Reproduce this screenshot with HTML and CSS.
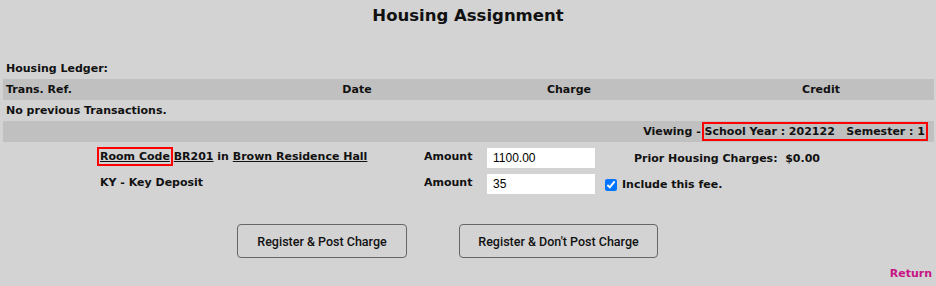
FILE: index.html
```html
<!DOCTYPE html>
<html lang="en">
<head>
    <meta charset="UTF-8">
    <title>Housing Assignment</title>
    <link rel="stylesheet" href="styles.css">
</head>
<body>
<div class="page">
    <h1 class="page-title">Housing Assignment</h1>

    <div class="ledger-label">Housing Ledger:</div>
    <table class="ledger">
        <tr class="ledger-head">
            <td class="col-ref">Trans. Ref.</td>
            <td class="col-date">Date</td>
            <td class="col-charge">Charge</td>
            <td class="col-credit">Credit</td>
        </tr>
        <tr>
            <td colspan="4">No previous Transactions.</td>
        </tr>
        <tr class="ledger-head">
            <td colspan="4" class="viewing">Viewing - <span class="marked">School Year : 202122&nbsp;&nbsp;&nbsp;Semester : 1</span></td>
        </tr>
    </table>

    <div class="assign-form">
        <div class="room"><span class="marked"><u>Room Code</u></span> <u>BR201</u> in <u>Brown Residence Hall</u></div>
        <div class="amount-label">Amount</div>
        <input type="text" class="amount" value="1100.00">
        <div class="extra prior">Prior Housing Charges:&nbsp; $0.00</div>

        <div class="room">KY - Key Deposit</div>
        <div class="amount-label">Amount</div>
        <input type="text" class="amount" value="35">
        <label class="extra fee"><input type="checkbox" checked> Include this fee.</label>
    </div>

    <div class="controls">
        <button class="btn">Register &amp; Post Charge</button>
        <button class="btn btn-wide">Register &amp; Don't Post Charge</button>
    </div>

    <div class="return-row"><a href="#" class="return-link">Return</a></div>
</div>
</body>
</html>
```

FILE: styles.css
```css
body {
    margin: 0;
    background-color: #d3d3d3;
    font-family: 'DejaVu Sans', sans-serif;
    font-size: 11px;
    font-weight: bold;
    color: #111;
}

.page {
    padding: 0 3px;
}

.page-title {
    margin: 0;
    height: 32px;
    line-height: 32px;
    text-align: center;
    font-size: 16.5px;
}

.ledger-label {
    margin-top: 27px;
    height: 20px;
    line-height: 20px;
    padding-left: 3px;
}

.ledger {
    width: 931px;
    border-collapse: collapse;
    table-layout: fixed;
}

.ledger td {
    padding: 0 3px;
    height: 21px;
}

.ledger-head td {
    background-color: #c0c0c0;
}

.col-ref {
    width: 275px;
}

.col-date {
    width: 140px;
}

.col-charge {
    width: 272px;
}

.col-date,
.col-charge,
.col-credit {
    text-align: center;
}

.viewing {
    text-align: right;
    padding-right: 9px !important;
}

.marked {
    outline: 2px solid #ff0000;
    outline-offset: 1px;
}

.assign-form {
    display: grid;
    grid-template-columns: 324px 63px 108px auto;
    row-gap: 6px;
    align-items: center;
    padding-left: 97px;
    margin-top: 6px;
}

.room,
.amount-label {
    height: 20px;
    line-height: 18px;
}

.amount {
    width: 108px;
    height: 20px;
    box-sizing: border-box;
    border: none;
    padding: 0 6px;
    font-family: 'Liberation Sans', sans-serif;
    font-size: 12px;
    color: #000;
}

.extra {
    padding-left: 8px;
}

.prior {
    padding-left: 39px;
}

.fee {
    display: flex;
    align-items: center;
    gap: 5px;
}

.fee input {
    margin: 2px 0 0 2px;
    width: 12px;
    height: 12px;
}

.controls {
    margin-top: 30px;
    padding-left: 234px;
    display: flex;
    gap: 52px;
}

.btn {
    width: 170px;
    height: 34px;
    background-color: #d3d3d3;
    border: 1px solid #666;
    border-radius: 4px;
    font-family: 'Roboto', sans-serif;
    font-size: 12.5px;
    font-weight: 500;
    color: #111;
}

.btn-wide {
    width: 199px;
}

.return-row {
    text-align: right;
    margin-top: 9px;
    padding-right: 1px;
}

.return-link {
    color: #c71585;
    text-decoration: none;
}
```
